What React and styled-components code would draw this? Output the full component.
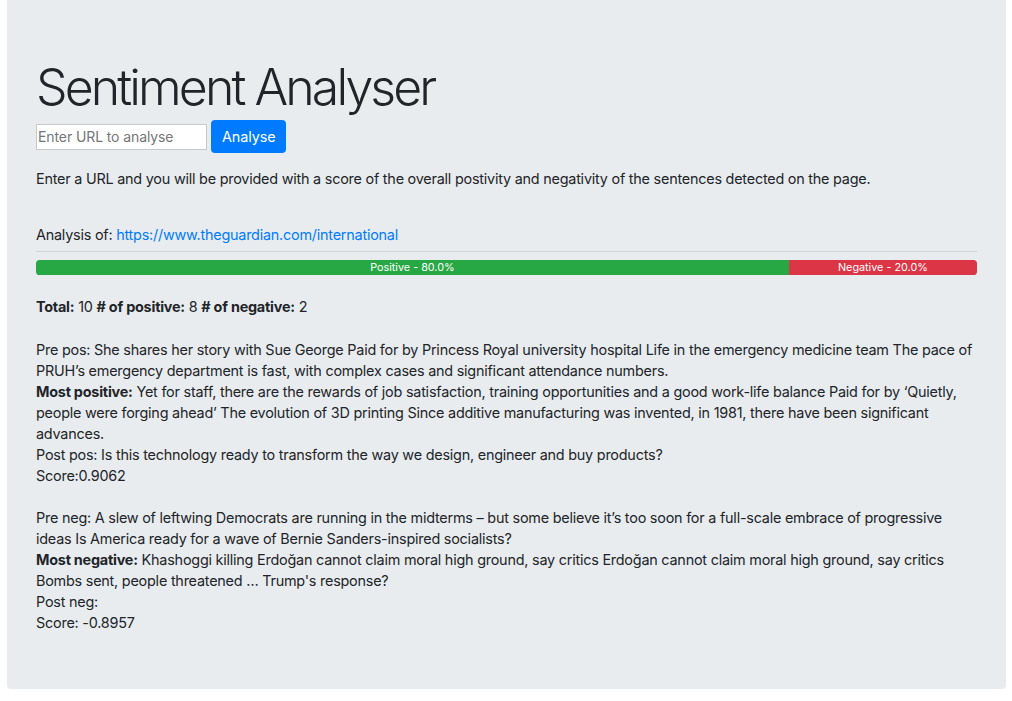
import React from 'react'
import styled, { createGlobalStyle } from 'styled-components'

const GlobalStyle = createGlobalStyle`
body {
margin:0;
background:#fff;
font-family:Inter, "Liberation Sans", Arial, sans-serif;
font-size:14.4px;
line-height:21px;
letter-spacing:-0.22px;
color:#212529;
}
`

const Jumbotron = styled.div`
margin:0 6px 0 7px;
padding:57px 29px 56px;
background-color:#e9ecef;
border-radius:0 0 4px 4px;
`

const Title = styled.h1`
margin:0 0 3px;
font-size:50px;
font-weight:300;
line-height:60px;
letter-spacing:-2.9px;
`

const Form = styled.form`
display:flex;
align-items:center;
gap:4px;
input {
width:171px;
height:26px;
box-sizing:border-box;
border:1px solid #c8c8c8;
padding:1px 1px;
font-family:inherit;
font-size:14px;
letter-spacing:-0.1px;
color:#495057;
background:#fff;
outline:none;
}
input::placeholder {
color:#767676;
}
`

const Button = styled.button`
height:33px;
padding:0 11px;
border:none;
border-radius:4px;
background-color:#007bff;
color:#fff;
font-family:inherit;
font-size:14.4px;
letter-spacing:-0.1px;
`

const Text = styled.p`
margin:${props => props.mt || 0}px 0 0;
`

const Link = styled.a`
color:#007bff;
text-decoration:none;
`

const Rule = styled.hr`
margin:6px 0 8px;
border:0;
border-top:1px solid rgba(0,0,0,0.1);
`

const Progress = styled.div`
display:flex;
height:15px;
overflow:hidden;
border-radius:3.6px;
background-color:#e9ecef;
font-size:10.8px;
line-height:15px;
letter-spacing:0;
`

const Bar = styled.div`
color:#fff;
text-align:center;
white-space:nowrap;
background-color:${props => props.color};
`

const results = { total: 10, positive: 8, negative: 2 }

const App = () => {
    const posPct = (results.positive / results.total) * 100
    const negPct = (results.negative / results.total) * 100
    return (
        <>
            <GlobalStyle />
            <Jumbotron>
                <Title>Sentiment Analyser</Title>
                <Form onSubmit={(e) => { e.preventDefault() }}>
                    <input type='text' placeholder='Enter URL to analyse' />
                    <Button type='submit'>Analyse</Button>
                </Form>
                <Text mt={15}>Enter a URL and you will be provided with a score of the overall postivity and negativity of the sentences detected on the page.</Text>
                <Text mt={35}>Analysis of: <Link href='#'>https://www.theguardian.com/international</Link></Text>
                <Rule />
                <Progress>
                    <Bar color='#28a745' style={{ width: posPct + '%' }}>Positive - {posPct.toFixed(1)}%</Bar>
                    <Bar color='#dc3545' style={{ width: negPct + '%' }}>Negative - {negPct.toFixed(1)}%</Bar>
                </Progress>
                <Text mt={21}><b>Total:</b> {results.total} <b># of positive:</b> {results.positive} <b># of negative:</b> {results.negative}</Text>
                <Text mt={22}>
                    Pre pos: She shares her story with Sue George Paid for by Princess Royal university hospital Life in the emergency medicine team The pace of PRUH’s emergency department is fast, with complex cases and significant attendance numbers.<br />
                    <b>Most positive:</b> Yet for staff, there are the rewards of job satisfaction, training opportunities and a good work-life balance Paid for by ‘Quietly, people were forging ahead’ The evolution of 3D printing Since additive manufacturing was invented, in 1981, there have been significant advances.<br />
                    Post pos: Is this technology ready to transform the way we design, engineer and buy products?<br />
                    Score:0.9062
                </Text>
                <Text mt={21}>
                    Pre neg: A slew of leftwing Democrats are running in the midterms – but some believe it’s too soon for a full-scale embrace of progressive ideas Is America ready for a wave of Bernie Sanders-inspired socialists?<br />
                    <b>Most negative:</b> Khashoggi killing Erdoğan cannot claim moral high ground, say critics Erdoğan cannot claim moral high ground, say critics Bombs sent, people threatened … Trump's response?<br />
                    Post neg:<br />
                    Score: -0.8957
                </Text>
            </Jumbotron>
        </>
    )
}

export default App
